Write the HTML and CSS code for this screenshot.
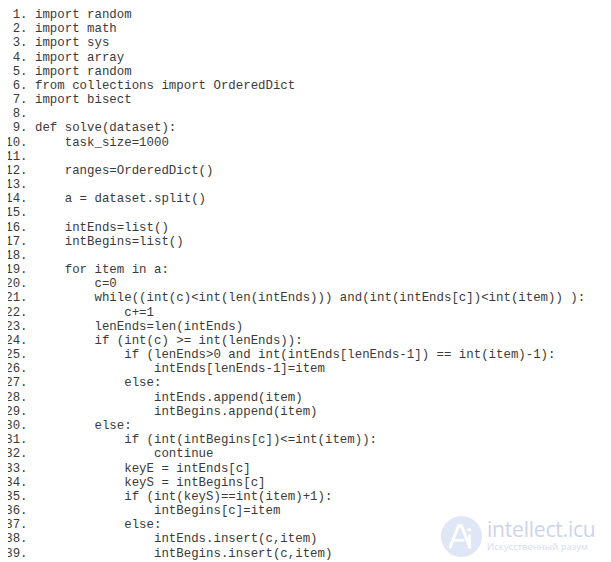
FILE: index.html
```html
<!DOCTYPE html>
<html>
<head>
<meta charset="utf-8">
<link rel="stylesheet" href="styles.css">
</head>
<body>
<ol class="code">
<li>import random</li>
<li>import math</li>
<li>import sys</li>
<li>import array</li>
<li>import random</li>
<li>from collections import OrderedDict</li>
<li>import bisect</li>
<li></li>
<li>def solve(dataset):</li>
<li>    task_size=1000</li>
<li></li>
<li>    ranges=OrderedDict()</li>
<li></li>
<li>    a = dataset.split()</li>
<li></li>
<li>    intEnds=list()</li>
<li>    intBegins=list()</li>
<li></li>
<li>    for item in a:</li>
<li>        c=0</li>
<li>        while((int(c)&lt;int(len(intEnds))) and(int(intEnds[c])&lt;int(item)) ):</li>
<li>            c+=1</li>
<li>        lenEnds=len(intEnds)</li>
<li>        if (int(c) &gt;= int(lenEnds)):</li>
<li>            if (lenEnds&gt;0 and int(intEnds[lenEnds-1]) == int(item)-1):</li>
<li>                intEnds[lenEnds-1]=item</li>
<li>            else:</li>
<li>                intEnds.append(item)</li>
<li>                intBegins.append(item)</li>
<li>        else:</li>
<li>            if (int(intBegins[c])&lt;=int(item)):</li>
<li>                continue</li>
<li>            keyE = intEnds[c]</li>
<li>            keyS = intBegins[c]</li>
<li>            if (int(keyS)==int(item)+1):</li>
<li>                intBegins[c]=item</li>
<li>            else:</li>
<li>                intEnds.insert(c,item)</li>
<li>                intBegins.insert(c,item)</li>
</ol>
<div class="brand">
  <svg class="brand-mark" width="41" height="41" viewBox="0 0 42 42">
    <circle cx="21" cy="21" r="21" fill="#dfe6f6"/>
    <path d="M9 33 L18 10 L21 10 L30 33" fill="none" stroke="#ffffff" stroke-width="3"/>
    <path d="M13 25 L24 25" stroke="#ffffff" stroke-width="2.5"/>
    <circle cx="29" cy="14" r="2" fill="#ffffff"/>
    <path d="M29 19 L29 33" stroke="#ffffff" stroke-width="3"/>
  </svg>
  <div class="brand-text">
    <div class="brand-name">intellect.icu</div>
    <div class="brand-sub">Искусственный разум</div>
  </div>
</div>
</body>
</html>
```
FILE: styles.css
```css
html {
  background: #ffffff;
  overflow: hidden;
}
body {
  margin: 8px;
  position: relative;
}
.code {
  margin: 0;
  padding-left: 27px;
  font-family: "Liberation Mono", "Courier New", monospace;
  font-size: 12.4px;
  line-height: 14.18px;
  color: #3a3a3a;
}
.code li {
  white-space: pre;
  height: 14.18px;
}
.brand {
  position: absolute;
  left: 433px;
  top: 508px;
  display: flex;
  align-items: flex-start;
  gap: 5px;
}
.brand-text {
  display: flex;
  flex-direction: column;
  gap: 2px;
  margin-top: 3px;
  font-family: "Open Sans", "Noto Sans", sans-serif;
  color: #cdd4ea;
}
.brand-name {
  font-size: 21px;
  line-height: 20px;
  letter-spacing: -0.2px;
}
.brand-sub {
  font-size: 9.5px;
  line-height: 11px;
  color: #d6dcee;
}
```
